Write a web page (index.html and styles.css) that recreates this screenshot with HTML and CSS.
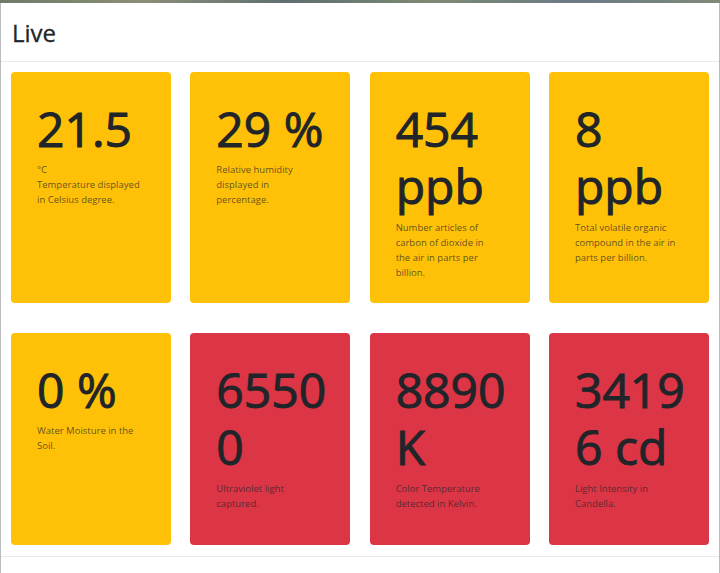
FILE: index.html
```html
<!DOCTYPE html>
<html lang="en">
<head>
<meta charset="utf-8">
<title>Live</title>
<link rel="stylesheet" href="styles.css">
</head>
<body>
<div class="backdrop"></div>
<div class="modal">
  <header class="modal-header">
    <h1 class="modal-title">Live</h1>
  </header>
  <main class="modal-body">
    <div class="grid">
      <div class="card warn">
        <div class="value">21.5</div>
        <p class="desc">°C<br>Temperature displayed in Celsius degree.</p>
      </div>
      <div class="card warn">
        <div class="value">29 %</div>
        <p class="desc">Relative humidity displayed in percentage.</p>
      </div>
      <div class="card warn">
        <div class="value">454 ppb</div>
        <p class="desc">Number articles of carbon of dioxide in the air in parts per billion.</p>
      </div>
      <div class="card warn">
        <div class="value">8 ppb</div>
        <p class="desc">Total volatile organic compound in the air in parts per billion.</p>
      </div>
      <div class="card warn">
        <div class="value">0 %</div>
        <p class="desc">Water Moisture in the Soil.</p>
      </div>
      <div class="card danger">
        <div class="value">65500</div>
        <p class="desc">Ultraviolet light captured.</p>
      </div>
      <div class="card danger">
        <div class="value">8890 K</div>
        <p class="desc">Color Temperature detected in Kelvin.</p>
      </div>
      <div class="card danger">
        <div class="value">34196 cd</div>
        <p class="desc">Light Intensity in Candella.</p>
      </div>
    </div>
  </main>
  <footer class="modal-footer"></footer>
</div>
</body>
</html>
```

FILE: styles.css
```css
* { box-sizing: border-box; }
html, body {
  margin: 0;
  padding: 0;
  height: 100%;
}
body {
  font-family: "Open Sans", "Noto Sans", sans-serif;
  color: #212529;
  background: #ffffff;
  overflow: hidden;
}
.backdrop {
  height: 3px;
  background: linear-gradient(90deg, #6f7a66 0%, #8a8f78 20%, #5f6e70 40%, #7d8a72 60%, #6a7a86 80%, #7f8a78 100%);
}
.modal {
  width: 720px;
  background: #ffffff;
  border-left: 1px solid #b9bcbf;
  border-right: 1px solid #b9bcbf;
  height: 570px;
}
.modal-header {
  padding: 16px 10px 13px;
  border-bottom: 1px solid #e9ecef;
}
.modal-title {
  margin: 0;
  font-size: 24px;
  font-weight: 500;
  line-height: 1.2;
  padding-left: 1px;
  -webkit-text-stroke: 0.3px #212529;
}
.modal-body {
  padding: 10px 10px 11px;
}
.grid {
  display: grid;
  grid-template-columns: repeat(4, 1fr);
  grid-template-rows: 231px 212px;
  column-gap: 19.3px;
  row-gap: 30px;
}
.card {
  border-radius: 4px;
  padding: 28px 22px 0 26px;
}
.warn { background: #ffc107; }
.danger { background: #dc3545; }
.value {
  font-size: 48px;
  line-height: 1.2;
  font-weight: 400;
  -webkit-text-stroke: 1px #212529;
  overflow-wrap: anywhere;
  color: #212529;
}
.desc {
  margin: 5px 0 0;
  max-width: 104px;
  font-size: 9.5px;
  line-height: 15px;
  color: rgba(33, 37, 41, 0.72);
}
.modal-footer {
  border-top: 1px solid #e9ecef;
  height: 20px;
}
```
